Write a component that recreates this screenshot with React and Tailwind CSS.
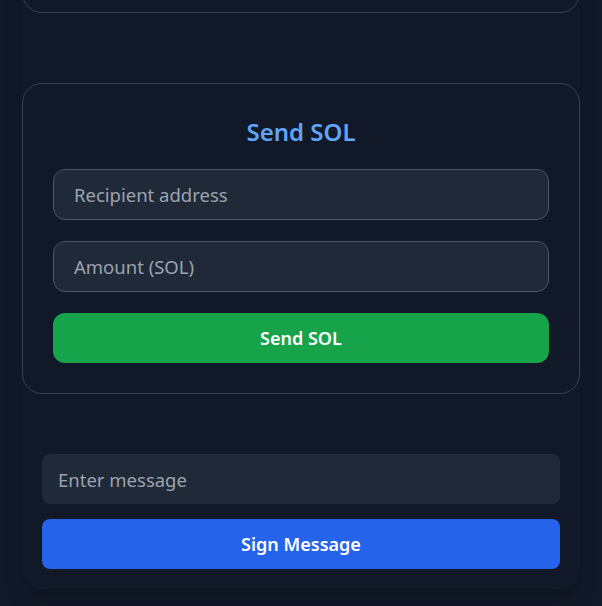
import { useState } from 'react'

export default function App() {
  const [recipient, setRecipient] = useState('')
  const [amount, setAmount] = useState('')
  const [message, setMessage] = useState('')

  return (
    <div
      className="min-h-[606px] bg-[#111827] pb-[18px]"
      style={{ fontFamily: '"Noto Sans", "Open Sans", sans-serif' }}
    >
      <div className="w-[558px] mx-auto rounded-[20px] bg-[#111827] shadow-xl">
        {/* Previous card, scrolled mostly out of view */}
        <div className="h-[200px] -mt-[187px] rounded-[20px] border border-[#374151]" />

        {/* Send SOL */}
        <div className="mt-[70px] rounded-[20px] border border-[#374151] px-[30px] pt-8 pb-[30px]">
          <h2 className="text-2xl leading-8 font-semibold text-[#60a5fa] text-center mb-[21px]">
            Send SOL
          </h2>
          <div className="flex flex-col gap-[21px]">
            <input
              type="text"
              value={recipient}
              onChange={(e) => setRecipient(e.target.value)}
              placeholder="Recipient address"
              className="h-[51px] w-full rounded-xl border border-[#4b5563] bg-[#1f2937] px-5 text-[18.5px] text-white placeholder-[#9ca3af] outline-none"
            />
            <input
              type="number"
              value={amount}
              onChange={(e) => setAmount(e.target.value)}
              placeholder="Amount (SOL)"
              className="h-[51px] w-full rounded-xl border border-[#4b5563] bg-[#1f2937] px-5 text-[18.5px] text-white placeholder-[#9ca3af] outline-none"
            />
            <button className="h-[50px] w-full rounded-xl bg-[#16a34a] text-lg font-semibold text-white">
              Send SOL
            </button>
          </div>
        </div>

        {/* Sign message */}
        <div className="mt-[60px] px-5 pb-5 flex flex-col gap-[15px]">
          <input
            type="text"
            value={message}
            onChange={(e) => setMessage(e.target.value)}
            placeholder="Enter message"
            className="h-[50px] w-full rounded-lg bg-[#1f2937] px-4 text-[18.5px] text-white placeholder-[#9ca3af] outline-none"
          />
          <button className="h-[50px] w-full rounded-lg bg-[#2563eb] text-lg font-semibold text-white">
            Sign Message
          </button>
        </div>
      </div>
    </div>
  )
}
